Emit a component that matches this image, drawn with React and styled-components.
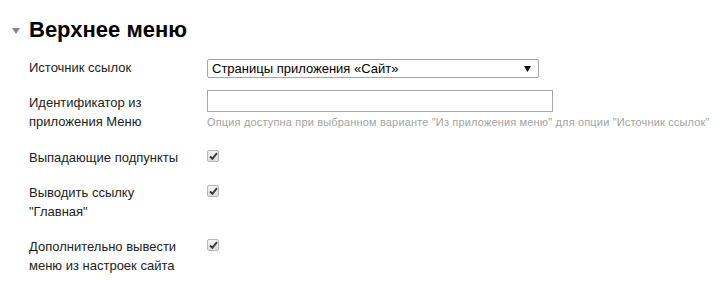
import React from "react";
import styled, { createGlobalStyle } from "styled-components";

const Global = createGlobalStyle`
  html, body { margin: 0; padding: 0; background: #fff; }
  body { font-family: "Liberation Sans", Arial, sans-serif; color: #222; }
`;

const Page = styled.div`
  padding: 18px 0 0 12px;
`;

const Header = styled.div`
  display: flex;
  align-items: center;
  gap: 9px;
  height: 24px;
`;

const Caret = styled.svg`
  width: 8px;
  height: 6px;
  margin-top: 2px;
  fill: #888;
`;

const Title = styled.h2`
  margin: 0;
  font-size: 22px;
  line-height: 24px;
  font-weight: bold;
  color: #000;
`;

const Form = styled.div`
  margin-top: 16px;
  padding-left: 17px;
`;

const Row = styled.div`
  display: grid;
  grid-template-columns: 178px 1fr;
  align-items: start;
  margin-bottom: ${(p) => p.$gap ?? 16}px;
`;

const Label = styled.div`
  width: 158px;
  font-size: 13px;
  line-height: 19px;
  color: #222;
  padding-top: ${(p) => p.$offset || 0}px;
`;

const Control = styled.div`
  display: flex;
  flex-direction: column;
  align-items: flex-start;
  padding-top: ${(p) => p.$offset || 0}px;
`;

const Select = styled.div`
  box-sizing: border-box;
  width: 332px;
  height: 19px;
  border: 1px solid #a6a6a6;
  border-radius: 2px;
  display: flex;
  align-items: center;
  justify-content: space-between;
  padding: 0 7px 0 4px;
  font-size: 13px;
  color: #000;
  background: #fff;
`;

const Arrow = styled.svg`
  width: 7px;
  height: 6px;
  fill: #111;
`;

const TextInput = styled.input`
  box-sizing: border-box;
  width: 346px;
  height: 22px;
  margin: 0;
  border: 1px solid #a9a9a9;
  border-radius: 0;
  padding: 0 4px;
  font: 13px "Liberation Sans", Arial, sans-serif;
  outline: none;
`;

const Hint = styled.div`
  margin-top: 3px;
  font-size: 11px;
  letter-spacing: 0.16px;
  line-height: 14px;
  color: #a3a3a3;
  white-space: nowrap;
`;

const Check = styled.span`
  box-sizing: border-box;
  width: 12px;
  height: 12px;
  border: 1px solid #b5b5b5;
  border-radius: 2px;
  background: linear-gradient(#f4f4f4, #dedede);
  display: flex;
  align-items: center;
  justify-content: center;
`;

const CheckMark = styled.svg`
  width: 9px;
  height: 8px;
  fill: none;
  stroke: #3c3c3c;
  stroke-width: 2;
`;

const Checkbox = () => (
  <Check>
    <CheckMark viewBox="0 0 9 8">
      <path d="M1 4.5 L3.4 6.8 L8 1.2" />
    </CheckMark>
  </Check>
);

export default function App() {
  return (
    <>
      <Global />
      <Page>
        <Header>
          <Caret viewBox="0 0 8 6">
            <path d="M0 0 H8 L4 6 Z" />
          </Caret>
          <Title>Верхнее меню</Title>
        </Header>
        <Form>
          <Row $gap={12}>
            <Label>Источник ссылок</Label>
            <Control $offset={1}>
              <Select>
                <span>Страницы приложения «Сайт»</span>
                <Arrow viewBox="0 0 7 6">
                  <path d="M0 0 H7 L3.5 6 Z" />
                </Arrow>
              </Select>
            </Control>
          </Row>
          <Row $gap={17}>
            <Label $offset={3}>Идентификатор из приложения Меню</Label>
            <Control>
              <TextInput type="text" />
              <Hint>
                Опция доступна при выбранном варианте "Из приложения меню" для опции "Источник ссылок"
              </Hint>
            </Control>
          </Row>
          <Row>
            <Label>Выпадающие подпункты</Label>
            <Control $offset={2}>
              <Checkbox />
            </Control>
          </Row>
          <Row>
            <Label>Выводить ссылку "Главная"</Label>
            <Control $offset={2}>
              <Checkbox />
            </Control>
          </Row>
          <Row>
            <Label>Дополнительно вывести меню из настроек сайта</Label>
            <Control $offset={2}>
              <Checkbox />
            </Control>
          </Row>
        </Form>
      </Page>
    </>
  );
}
